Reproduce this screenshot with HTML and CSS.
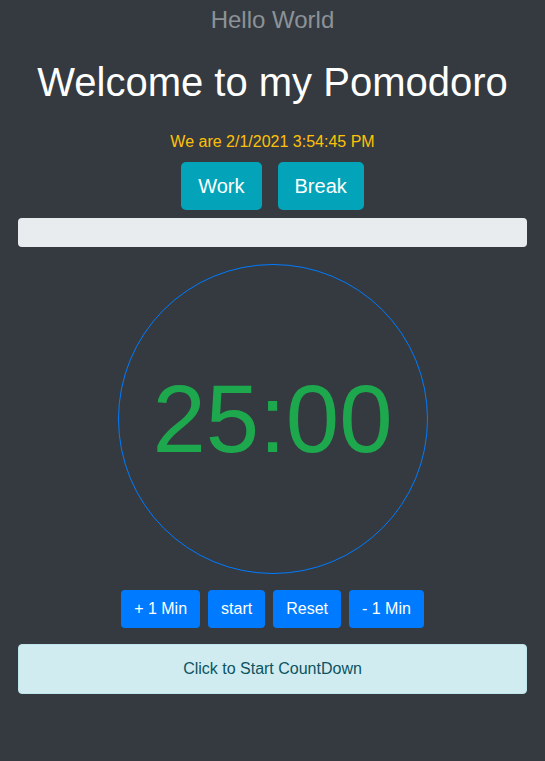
FILE: index.html
```html
<!DOCTYPE html>
<html>
<head>
<meta charset="utf-8">
<link rel="stylesheet" href="styles.css">
</head>
<body>
<div class="app">
  <div class="hello">Hello World</div>
  <h1 class="title">Welcome to my Pomodoro</h1>
  <div class="date">We are 2/1/2021 3:54:45 PM</div>
  <div class="modes">
    <button class="btn-lg">Work</button>
    <button class="btn-lg">Break</button>
  </div>
  <div class="progress"></div>
  <div class="circle"><span class="time">25:00</span></div>
  <div class="controls">
    <button class="btn">+ 1 Min</button>
    <button class="btn">start</button>
    <button class="btn">Reset</button>
    <button class="btn">- 1 Min</button>
  </div>
  <div class="alert">Click to Start CountDown</div>
</div>
</body>
</html>
```
FILE: styles.css
```css
html, body {
  margin: 0;
  padding: 0;
  background: #343a40;
  font-family: "Liberation Sans", Arial, sans-serif;
}
.app {
  padding: 0 18px;
  display: flex;
  flex-direction: column;
  align-items: stretch;
  text-align: center;
}
.hello {
  color: #8c9298;
  font-size: 24px;
  line-height: 28px;
  margin-top: 6px;
}
.title {
  color: #ffffff;
  font-weight: 400;
  font-size: 40px;
  line-height: 48px;
  margin: 24px 0 0;
}
.date {
  color: #ffc107;
  font-size: 16px;
  line-height: 24px;
  margin-top: 24px;
}
.modes {
  display: flex;
  justify-content: center;
  gap: 16px;
  margin-top: 8px;
}
.btn-lg, .btn {
  font-family: inherit;
  border: none;
  color: #fff;
  cursor: pointer;
}
.btn-lg {
  background: #03a4b9;
  font-size: 20px;
  line-height: 30px;
  padding: 9px 17px;
  border-radius: 5px;
}
.progress {
  height: 29px;
  background: #e9ecef;
  border-radius: 4px;
  margin-top: 8px;
}
.circle {
  align-self: center;
  width: 308px;
  height: 308px;
  border: 1px solid #007bff;
  border-radius: 50%;
  margin-top: 17px;
  display: flex;
  align-items: center;
  justify-content: center;
}
.time {
  color: #1ea84e;
  font-size: 96px;
  line-height: 1;
}
.controls {
  display: flex;
  justify-content: center;
  gap: 8px;
  margin-top: 16px;
}
.btn {
  background: #007bff;
  font-size: 16px;
  line-height: 24px;
  padding: 7px 13px;
  border-radius: 4px;
}
.alert {
  margin-top: 16px;
  background: #d1ecf1;
  border: 1px solid #bee5eb;
  color: #0c5460;
  border-radius: 4px;
  font-size: 16px;
  line-height: 24px;
  padding: 12px 20px;
}
```
